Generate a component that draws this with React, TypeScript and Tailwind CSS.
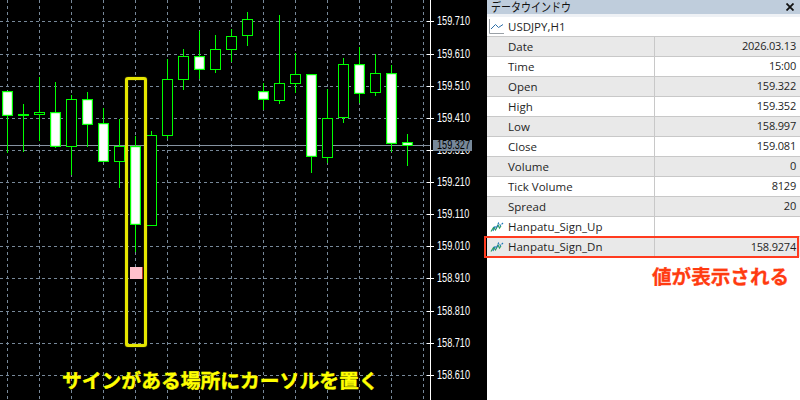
import React from 'react';

type Candle = { x: number; top: number; bottom: number; hi: number; lo: number; bear?: boolean };

// chart data read off the picture: body top/bottom and wick ends in px
const candles: Candle[] = [
  { x: 7, top: 91, bottom: 115, hi: 91, lo: 153, bear: true },
  { x: 23, top: 114, bottom: 115, hi: 104, lo: 152, bear: true },
  { x: 39, top: 112, bottom: 114, hi: 77, lo: 141 },
  { x: 55, top: 112, bottom: 146, hi: 82, lo: 148, bear: true },
  { x: 71, top: 99, bottom: 146, hi: 95, lo: 175 },
  { x: 87, top: 99, bottom: 124, hi: 92, lo: 147, bear: true },
  { x: 103, top: 123, bottom: 161, hi: 108, lo: 162, bear: true },
  { x: 119, top: 146, bottom: 161, hi: 119, lo: 188 },
  { x: 135, top: 146, bottom: 224, hi: 136, lo: 252, bear: true },
  { x: 151, top: 135, bottom: 225, hi: 131, lo: 225 },
  { x: 167, top: 79, bottom: 135, hi: 59, lo: 139 },
  { x: 183, top: 56, bottom: 79, hi: 49, lo: 90 },
  { x: 199, top: 56, bottom: 69, hi: 31, lo: 79, bear: true },
  { x: 215, top: 49, bottom: 69, hi: 35, lo: 73 },
  { x: 231, top: 36, bottom: 49, hi: 29, lo: 62 },
  { x: 247, top: 19, bottom: 35, hi: 12, lo: 46 },
  { x: 263, top: 91, bottom: 99, hi: 83, lo: 110, bear: true },
  { x: 279, top: 83, bottom: 100, hi: 15, lo: 104 },
  { x: 295, top: 74, bottom: 83, hi: 53, lo: 93 },
  { x: 311, top: 74, bottom: 156, hi: 74, lo: 173, bear: true },
  { x: 327, top: 118, bottom: 157, hi: 89, lo: 163 },
  { x: 343, top: 64, bottom: 117, hi: 58, lo: 123 },
  { x: 359, top: 64, bottom: 93, hi: 47, lo: 103, bear: true },
  { x: 375, top: 73, bottom: 92, hi: 54, lo: 96 },
  { x: 391, top: 73, bottom: 143, hi: 65, lo: 152, bear: true },
  { x: 407, top: 142, bottom: 145, hi: 134, lo: 166, bear: true },
];

const gridX = [7, 39, 71, 103, 135, 167, 199, 231, 263, 295, 327, 359, 391, 423];

const prices = [
  { y: 21, label: '159.710' },
  { y: 54, label: '159.610' },
  { y: 86, label: '159.510' },
  { y: 118, label: '159.410' },
  { y: 150, label: '159.310' },
  { y: 182, label: '159.210' },
  { y: 214, label: '159.110' },
  { y: 246, label: '159.010' },
  { y: 278, label: '158.910' },
  { y: 311, label: '158.810' },
  { y: 343, label: '158.710' },
  { y: 375, label: '158.610' },
];

const rows = [
  { name: 'Date', value: '2026.03.13' },
  { name: 'Time', value: '15:00' },
  { name: 'Open', value: '159.322' },
  { name: 'High', value: '159.352' },
  { name: 'Low', value: '158.997' },
  { name: 'Close', value: '159.081' },
  { name: 'Volume', value: '0' },
  { name: 'Tick Volume', value: '8129' },
  { name: 'Spread', value: '20' },
];

const SignIcon = () => (
  <svg width="14" height="12" viewBox="0 0 14 12" fill="none" className="shrink-0">
    <path d="M1 10.5 L3.5 6.5 L5.5 9 L8 4 L9.5 7 L11 5" stroke="#2f9e5f" strokeWidth="1.2" />
    <path d="M3 10 L5 5 L6.5 7 L8.5 2 L10.5 4.5 L13 2" stroke="#1f78b8" strokeWidth="1.1" strokeDasharray="2 1" />
  </svg>
);

const Chart = () => (
  <svg width="487" height="400" className="block" shapeRendering="crispEdges">
    {gridX.map((x) => (
      <line key={x} x1={x + 0.5} x2={x + 0.5} y1={0} y2={400} stroke="#778899" strokeDasharray="3 3" />
    ))}
    {prices.map((p) => (
      <line key={p.y} x1={0} x2={430} y1={p.y + 0.5} y2={p.y + 0.5} stroke="#778899" strokeDasharray="3 3" />
    ))}
    <line x1={0} x2={430} y1={145.5} y2={145.5} stroke="#8592a0" />
    {candles.map((c) => (
      <g key={c.x}>
        <line x1={c.x + 0.5} x2={c.x + 0.5} y1={c.hi} y2={c.lo} stroke="#00ff00" />
        {c.bear ? (
          <rect
            x={c.x - 4.4}
            y={c.top + 0.6}
            width={9.8}
            height={c.bottom - c.top - 0.2}
            fill="#ffffff"
            stroke="#00ff00"
            strokeWidth={1.2}
            shapeRendering="auto"
          />
        ) : (
          <rect x={c.x - 4.5} y={c.top + 0.5} width={10} height={c.bottom - c.top} fill="#000000" stroke="#00ff00" />
        )}
      </g>
    ))}
    {/* sign marker */}
    <rect x={130} y={267} width={12} height={12} fill="#ffc0cb" />
    <rect x={142} y={267} width={1} height={12} fill="#b5332a" />
    {/* axis */}
    <rect x={430} y={0} width={1} height={400} fill="#ffffff" />
    {prices.map((p) => (
      <rect key={p.y} x={427} y={p.y} width={7} height={1} fill="#ffffff" />
    ))}
  </svg>
);

export default function App() {
  return (
    <div className="w-[800px] h-[400px] flex overflow-hidden font-['Open_Sans','Noto_Sans_CJK_JP',sans-serif]">
      {/* chart side */}
      <div className="relative w-[487px] h-full bg-black shrink-0">
        <Chart />
        {prices.map((p) => (
          <span
            key={p.y}
            className="absolute left-[437px] text-[12px] leading-[12px] text-white origin-left scale-x-[0.76] font-['Liberation_Sans',sans-serif]"
            style={{ top: p.y - 6 }}
          >
            {p.label}
          </span>
        ))}
        <div className="absolute left-[433px] top-[140px] w-[39px] h-[11px] bg-[#778899] flex items-center">
          <span className="ml-[4px] text-[12px] leading-[11px] text-black origin-left scale-x-[0.76] font-['Liberation_Sans',sans-serif]">159.327</span>
        </div>
        <div className="absolute left-[125px] top-[77px] w-[22px] h-[270px] border-[3px] border-[#e6e600] rounded-[3px] shadow-[0_0_1px_#e6e600,inset_0_0_1px_#e6e600]" />
        <div className="absolute left-[62px] top-[366px] text-[19.8px] leading-[28px] font-bold text-[#ffff00] [-webkit-text-stroke:0.4px_#ffff00] whitespace-nowrap font-['Noto_Sans_CJK_JP',sans-serif]">
          サインがある場所にカーソルを置く
        </div>
      </div>

      {/* data window */}
      <div className="flex-1 flex flex-col bg-white text-[11.5px] text-[#1f1f1f]">
        <div className="h-[14px] bg-[#bfcddc] flex items-center justify-between pl-[4px] pr-[6px]">
          <span className="text-[12.5px] leading-[14px] origin-left scale-x-[0.8] text-[#111111] whitespace-nowrap font-['Noto_Sans_CJK_JP',sans-serif]">データウインドウ</span>
          <svg width="8" height="8" viewBox="0 0 8 8" stroke="#111111" strokeWidth="1.8"><path d="M0.5 0.5 L7.5 7.5 M7.5 0.5 L0.5 7.5" /></svg>
        </div>
        <div className="h-[3px] bg-[#eef1f5]" />
        <div className="h-[20px] flex items-center gap-[4px] pl-[2px] border-b border-[#c8c8c8]">
          <svg width="15" height="15" viewBox="0 0 15 15" fill="none" className="shrink-0">
            <path d="M0.5 0 V14.5 H15" stroke="#9aa0a6" />
            <path d="M2 10 L6.5 5.5 L9.5 8.5 L14 5.5" stroke="#2d6fa8" />
          </svg>
          <span>USDJPY,H1</span>
        </div>
        {rows.map((r, i) => (
          <div key={r.name} className={`h-[20px] flex border-b border-[#c8c8c8] ${i % 2 === 0 ? 'bg-[#e9e9e9]' : 'bg-white'}`}>
            <div className="w-[168px] pl-[21px] border-r border-[#c8c8c8] flex items-center">{r.name}</div>
            <div className="flex-1 pr-[4px] flex items-center justify-end text-[11px] tracking-[-0.2px]">{r.value}</div>
          </div>
        ))}
        <div className="h-[20px] flex border-b border-[#c8c8c8]">
          <div className="w-[168px] pl-[3px] gap-[4px] border-r border-[#c8c8c8] flex items-center">
            <SignIcon />Hanpatu_Sign_Up
          </div>
          <div className="flex-1" />
        </div>
        <div className="relative h-[20px] flex bg-[#e9e9e9]">
          <div className="w-[168px] pl-[3px] gap-[4px] border-r border-[#c8c8c8] flex items-center">
            <SignIcon />Hanpatu_Sign_Dn
          </div>
          <div className="flex-1 pr-[4px] flex items-center justify-end text-[11px] tracking-[-0.2px]">158.9274</div>
          <div className="absolute -left-[3px] right-[1px] -top-[1px] -bottom-[1px] border-2 border-[#ff3b1f]" />
        </div>
        <div className="mt-[6px] ml-[165px] text-[19.6px] leading-[26px] font-bold text-[#ff3b10] [-webkit-text-stroke:0.3px_#ff3b10] whitespace-nowrap font-['Noto_Sans_CJK_JP',sans-serif]">
          値が表示される
        </div>
      </div>
    </div>
  );
}
